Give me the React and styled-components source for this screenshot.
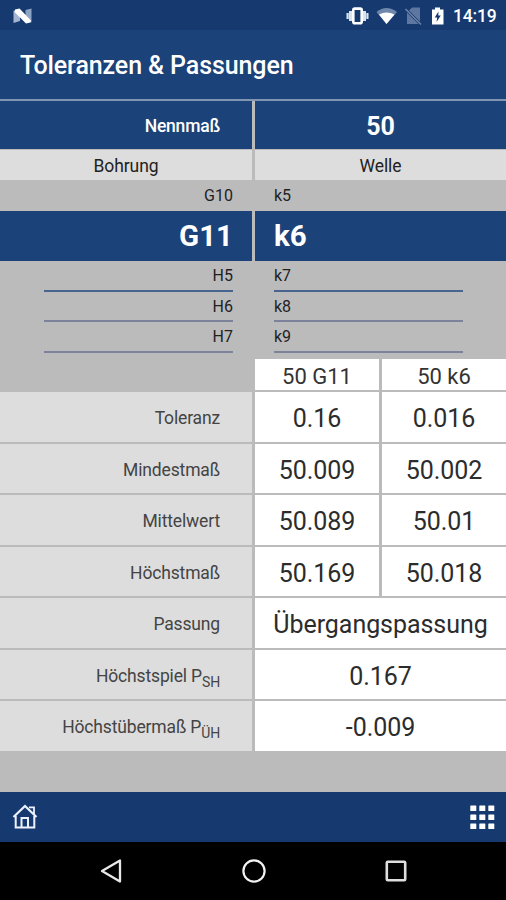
import styled, { createGlobalStyle } from "styled-components";

const results = [
  { label: "Toleranz", values: ["0.16", "0.016"] },
  { label: "Mindestmaß", values: ["50.009", "50.002"] },
  { label: "Mittelwert", values: ["50.089", "50.01"] },
  { label: "Höchstmaß", values: ["50.169", "50.018"] },
  { label: "Passung", values: ["Übergangspassung"] },
  { label: "Höchstspiel P", sub: "SH", values: ["0.167"] },
  { label: "Höchstübermaß P", sub: "ÜH", values: ["-0.009"] },
];

const dots = [0, 9, 18];

export default function App() {
  return (
    <>
      <GlobalStyle />
      <Screen>
        <StatusBar>
          <NougatIcon />
          <StatusIcons />
          <Clock>14:19</Clock>
        </StatusBar>
        <Header>
          <Title>Toleranzen &amp; Passungen</Title>
        </Header>
        <NominalRow>
          <NominalLabel>Nennmaß</NominalLabel>
          <NominalValue>50</NominalValue>
        </NominalRow>
        <TypeRow>
          <TypeCell>Bohrung</TypeCell>
          <TypeCell>Welle</TypeCell>
        </TypeRow>
        <PickerRow>
          <Option $right>G10</Option>
          <Option>k5</Option>
        </PickerRow>
        <SelectedRow>
          <Selected $right>G11</Selected>
          <Selected>k6</Selected>
        </SelectedRow>
        <PickerList>
          <Wheel $right>
            <WheelItem $first>H5</WheelItem>
            <WheelItem>H6</WheelItem>
            <WheelItem>H7</WheelItem>
          </Wheel>
          <Wheel>
            <WheelItem $first>k7</WheelItem>
            <WheelItem>k8</WheelItem>
            <WheelItem>k9</WheelItem>
          </Wheel>
        </PickerList>
        <ColumnHeads>
          <Head>50 G11</Head>
          <Head>50 k6</Head>
        </ColumnHeads>
        <Results>
          {results.map((row) => (
            <ResultRow key={row.label}>
              <ResultLabel>
                {row.label}
                {row.sub && <Sub>{row.sub}</Sub>}
              </ResultLabel>
              {row.values.map((value) => (
                <Value key={value} $wide={row.values.length === 1}>
                  {value}
                </Value>
              ))}
            </ResultRow>
          ))}
        </Results>
        <Toolbar>
          <HomeIcon />
          <GridIcon />
        </Toolbar>
        <NavBar>
          <svg width="22" height="26" viewBox="0 0 22 26">
            <path d="M20 2.5V23.5L2 13Z" fill="none" stroke="#e8e8e8" strokeWidth="2.3" strokeLinejoin="round" />
          </svg>
          <svg width="26" height="26" viewBox="0 0 26 26">
            <circle cx="13" cy="13" r="10.6" fill="none" stroke="#f2f2f2" strokeWidth="2.2" />
          </svg>
          <svg width="22" height="22" viewBox="0 0 22 22">
            <rect x="1.8" y="1.8" width="18.4" height="18.4" rx="1" fill="none" stroke="#dedede" strokeWidth="2.6" />
          </svg>
        </NavBar>
      </Screen>
    </>
  );
}

function NougatIcon() {
  return (
    <svg width="20" height="16" viewBox="0 0 20 16">
      <path d="M0.5 2.5 7 4.5V13L0.5 15Z" fill="#a3b5d0" />
      <path d="M12.5 2 18.5 0.5V14.5L12.5 12Z" fill="#8da3c3" />
      <path d="M2 1.5 6.5 0.5 18 12.5 17.5 14.5 13 15.5 1.5 4Z" fill="#fff" />
    </svg>
  );
}

function StatusIcons() {
  return (
    <StatusSvg width="102" height="20" viewBox="0 0 102 20">
      <g fill="#dce4f0">
        <rect x="0.5" y="7" width="2.2" height="6" />
        <rect x="3" y="5" width="3" height="10" />
        <rect x="17" y="5" width="3" height="10" />
        <rect x="20.3" y="7" width="2.2" height="6" />
      </g>
      <rect x="7.3" y="2.6" width="8.4" height="14.6" rx="1.5" fill="none" stroke="#fff" strokeWidth="2.6" />
      <path d="M30.5 6Q40.5 -2 51 6L40.5 18Z" fill="#6f87ac" />
      <path d="M33 8.5Q40.5 4.5 48.5 8.5L40.5 18Z" fill="#fff" />
      <path d="M63 4.5 66 1.5H74V15.5Z M61 6.5 72.5 18H61Z" fill="#5d77a0" />
      <path d="M59.5 3 75 18.5" stroke="#6d84a9" strokeWidth="1.5" />
      <path d="M86 3.5H89V1.5H94V3.5H97.5V18.5H86Z" fill="#fff" />
      <path d="M92.5 5.5 88.7 11.5H91.2L90.5 16 94.8 9.5H92.3Z" fill="#163a6f" />
    </StatusSvg>
  );
}

function HomeIcon() {
  return (
    <svg width="26" height="26" viewBox="0 0 26 26" fill="none" stroke="#eef2ff">
      <path d="M1.5 13 13 2 24.5 13" strokeWidth="2.2" />
      <path d="M3.7 12V23.500H22.3V12" strokeWidth="2" />
      <path d="M9.5 23.5V14H16V23.5" strokeWidth="2" />
      <path d="M17 3.3H22V10" strokeWidth="1.8" />
    </svg>
  );
}

function GridIcon() {
  return (
    <svg width="25" height="25" viewBox="0 0 25 25" fill="#fff">
      {dots.map((y) =>
        dots.map((x) => <rect key={`${x}-${y}`} x={x + 0.3} y={y + 0.5} width="6" height="5.6" rx="0.5" />)
      )}
    </svg>
  );
}

const GlobalStyle = createGlobalStyle`
  * {
    box-sizing: border-box;
  }

  body {
    margin: 0;
    background: #000;
    font-family: Roboto, "Liberation Sans", sans-serif;
    color: #222;
  }
`;

const Screen = styled.div`
  width: 506px;
  height: 900px;
  overflow: hidden;
  display: flex;
  flex-direction: column;
  background: #bbb;
`;

const StatusBar = styled.div`
  height: 30px;
  flex: none;
  display: flex;
  align-items: center;
  padding: 1px 8px 0 13px;
  background: #163a6f;
`;

const StatusSvg = styled.svg`
  margin-left: auto;
`;

const Clock = styled.span`
  width: 45px;
  margin-left: 5px;
  font-size: 17.5px;
  font-weight: 500;
  letter-spacing: -0.2px;
  color: #fff;
`;

const Header = styled.header`
  height: 71px;
  flex: none;
  display: flex;
  align-items: center;
  padding: 2px 20px 0;
  background: #1b4279;
  border-bottom: 2px solid #8396b1;
`;

const Title = styled.h1`
  margin: 0;
  font-size: 25px;
  font-weight: 500;
  letter-spacing: -0.1px;
  color: #fff;
`;

const Row = styled.div`
  flex: none;
  display: grid;
  grid-template-columns: 252px 251px;
  column-gap: 3px;
`;

const NominalRow = styled(Row)`
  height: 48px;
  color: #fff;
`;

const NominalLabel = styled.div`
  display: flex;
  align-items: center;
  justify-content: flex-end;
  padding: 2px 32px 0 0;
  background: #1b4279;
  font-size: 17.5px;
  font-weight: 500;
  letter-spacing: -0.2px;
`;

const NominalValue = styled.div`
  display: flex;
  align-items: center;
  justify-content: center;
  padding-top: 2px;
  background: #1b4279;
  font-size: 25px;
  font-weight: 700;
`;

const TypeRow = styled(Row)`
  height: 32px;
  padding: 1px 0;
`;

const TypeCell = styled.div`
  display: flex;
  align-items: center;
  justify-content: center;
  padding-top: 1px;
  background: #ddd;
  font-size: 17.5px;
  letter-spacing: -0.1px;
`;

const PickerRow = styled(Row)`
  height: 30px;
`;

const Option = styled.div`
  padding: 5px 19px 0;
  font-size: 16px;
  line-height: 20px;
  text-align: ${({ $right }) => ($right ? "right" : "left")};
`;

const SelectedRow = styled(Row)`
  height: 50px;
`;

const Selected = styled.div`
  display: flex;
  align-items: center;
  justify-content: ${({ $right }) => ($right ? "flex-end" : "flex-start")};
  padding: 0 19px 1px;
  background: #1b4279;
  color: #fff;
  font-size: 29.5px;
  font-weight: 700;
`;

const PickerList = styled(Row)`
  height: 98px;
`;

const Wheel = styled.div`
  width: 189px;
  margin-left: ${({ $right }) => ($right ? "44px" : "19px")};
  text-align: ${({ $right }) => ($right ? "right" : "left")};
`;

const WheelItem = styled.div`
  height: 30.5px;
  padding-top: 5px;
  border-bottom: 2px solid ${({ $first }) => ($first ? "#486590" : "#7d829b")};
  font-size: 16px;
  line-height: 20px;
`;

const ColumnHeads = styled.div`
  flex: none;
  height: 31px;
  margin: 0 0 2px 255px;
  display: grid;
  grid-template-columns: 124px 124px;
  column-gap: 3px;
`;

const Head = styled.div`
  display: flex;
  align-items: center;
  justify-content: center;
  padding-top: 3px;
  background: #fff;
  color: #333;
  font-size: 22px;
`;

const Results = styled.div`
  flex: none;
  height: 400px;
`;

const ResultRow = styled.div`
  height: 51.5px;
  padding-bottom: 2px;
  display: grid;
  grid-template-columns: 252px 124px 124px;
  grid-template-rows: 49.5px;
  column-gap: 3px;
`;

const ResultLabel = styled.div`
  padding-right: 32px;
  background: #ddd;
  color: #444;
  font-size: 17.5px;
  letter-spacing: -0.15px;
  line-height: 52px;
  text-align: right;
  white-space: nowrap;
`;

const Sub = styled.sub`
  position: relative;
  top: 5px;
  vertical-align: baseline;
  font-size: 14px;
  line-height: 0;
`;

const Value = styled.div`
  grid-column: ${({ $wide }) => ($wide ? "2 / 4" : "auto")};
  background: #fff;
  color: #2c2c2c;
  font-size: 25px;
  letter-spacing: -0.05px;
  line-height: 53px;
  text-align: center;
`;

const Toolbar = styled.div`
  height: 50px;
  flex: none;
  display: flex;
  align-items: center;
  justify-content: space-between;
  padding: 0 11px 0 12px;
  background: #163a6f;
`;

const NavBar = styled.nav`
  flex: 1;
  display: flex;
  align-items: center;
  justify-content: space-between;
  padding: 0 99px 0 100px;
  background: #000;
`;
